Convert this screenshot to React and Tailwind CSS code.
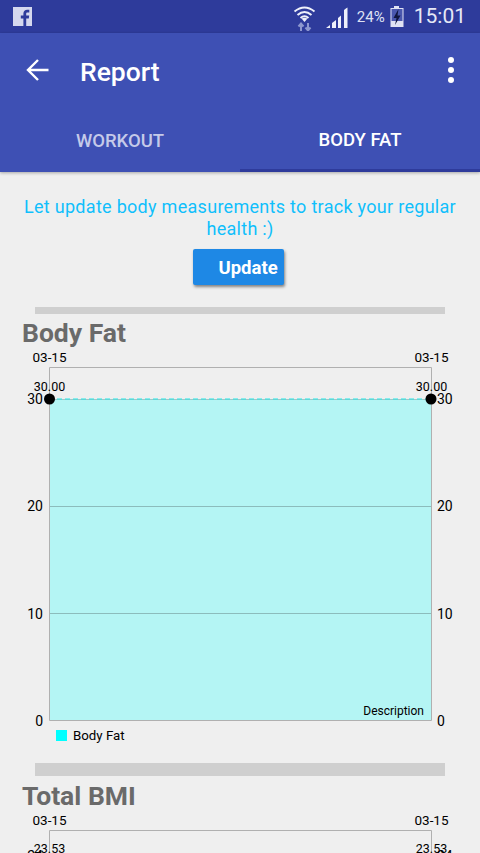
const font = { fontFamily: "Roboto, sans-serif" };

function StatusIcons() {
  return (
    <div className="flex items-center">
      <svg width="24" height="28" viewBox="0 0 24 28" className="mr-[9px]">
        <g fill="none" stroke="#eef0fa" strokeWidth="2">
          <path d="M1.5 8.5 Q11.5 0.5 21.5 8.5" />
          <path d="M4.5 12 Q11.5 6 18.5 12" />
          <path d="M7.5 15 Q11.5 11.5 15.5 15" />
        </g>
        <path d="M11.5 19 L8.5 15.5 Q11.5 14 14.5 15.5 Z" fill="#eef0fa" />
        <path d="M8 28 V21 M5.5 23.5 L8 20.5 L10.5 23.5 M15 20 V27 M12.5 24.5 L15 27.5 L17.5 24.5" stroke="#8d97cf" strokeWidth="2" fill="none" />
      </svg>
      <svg width="22" height="22" viewBox="0 0 22 22" className="mr-[9px] mt-[3px]" fill="#eef0fa">
        <path d="M0 21 L4 18 V21 Z" />
        <path d="M6 21 V16 L10 13 V21 Z" />
        <path d="M12 21 V11 L15 8.5 V21 Z" />
        <path d="M18 21 V3 Q20 1 21.5 0.5 V21 Z" />
      </svg>
      <span className="text-[15px] text-[#dfe2f4] mr-[5px] mt-[1px]">24%</span>
      <svg width="14" height="22" viewBox="0 0 14 22" className="mr-[10px] mt-[1px]">
        <path d="M4 0 H9 V2 H13.5 V21 H0.5 V2 H4 Z" fill="#dfe2f4" />
        <path d="M1.5 3 H12.5 V15 H1.5 Z" fill="#4a57ae" />
        <path d="M8.5 3 L3.5 12 H6.5 L5 19 L10.5 9.5 H7.5 Z" fill="#10163f" />
      </svg>
      <span className="text-[21px] text-[#e6e8f6]">15:01</span>
    </div>
  );
}

function Chart({ value, valueY, ticks, height, showDesc }) {
  const L = 49, R = 431, T = 20, B = 373;
  const y30 = 52;
  return (
    <svg width="480" height={height} viewBox={`0 0 480 ${height}`} className="block shrink-0" style={font}>
      <text x="49.5" y="14.5" textAnchor="middle" fontSize="13.5" fill="#000">03-15</text>
      <text x="431.5" y="14.5" textAnchor="middle" fontSize="13.5" fill="#000">03-15</text>
      {showDesc && <rect x={L + 1} y={y30} width={R - L - 1} height={B - y30} fill="#b4f5f4" />}
      {showDesc && <line x1={L} x2={R} y1={159.5} y2={159.5} stroke="#8cbcbc" />}
      {showDesc && <line x1={L} x2={R} y1={266.5} y2={266.5} stroke="#8cbcbc" />}
      {showDesc && <line x1={L} x2={R} y1={y30 + 0.5} y2={y30 + 0.5} stroke="#9fc8c8" />}
      {showDesc && <line x1={L} x2={R} y1={y30} y2={y30} stroke="#22e6e6" strokeDasharray="5 3" />}
      <path d={`M${L + 0.5} ${B + 0.5} V${T + 0.5} H${R + 0.5} V${B + 0.5} H${L + 0.5}`} fill="none" stroke="#b0b0b0" strokeWidth="1" />
      <text x="49.5" y={valueY} textAnchor="middle" fontSize="12.5" fill="#000">{value}</text>
      <text x="431.5" y={valueY} textAnchor="middle" fontSize="12.5" fill="#000">{value}</text>
      {showDesc && <circle cx="49.5" cy={y30} r="5.5" fill="#000" />}
      {showDesc && <circle cx="431" cy={y30} r="5.5" fill="#000" />}
      {ticks.map(([t, y]) => (
        <g key={t}>
          <text x="43" y={y + 5} textAnchor="end" fontSize="14" fill="#000">{t}</text>
          <text x="437" y={y + 5} fontSize="14" fill="#000">{t}</text>
        </g>
      ))}
      {showDesc && <text x="424" y="368" textAnchor="end" fontSize="12" fill="#000">Description</text>}
      {showDesc && <rect x="56" y="383" width="11" height="11" fill="#00ffff" />}
      {showDesc && <text x="73" y="393" fontSize="13.3" fill="#000">Body Fat</text>}
    </svg>
  );
}

export default function App() {
  return (
    <div className="w-[480px] h-[853px] overflow-hidden flex flex-col bg-[#efefef]" style={font}>
      <div className="h-[33px] shrink-0 bg-[#2e3b9b] flex items-center justify-between pl-[13px] pr-[14px]">
        <svg width="19" height="19" viewBox="0 0 19 19" className="mb-[1px]">
          <rect width="19" height="19" fill="#d5d8ee" />
          <path d="M13.2 19 V11.5 H15.8 L16.2 8.6 H13.2 V6.8 C13.2 5.9 13.5 5.4 14.7 5.4 H16.3 V2.8 C15.9 2.8 15.1 2.7 14.2 2.7 C12 2.7 10.4 4 10.4 6.5 V8.6 H7.8 V11.5 H10.4 V19 Z" fill="#2e3b9b" />
        </svg>
        <StatusIcons />
      </div>
      <header className="h-[139px] shrink-0 bg-[#3e50b4] flex flex-col shadow-[0_1px_3px_rgba(0,0,0,0.3)] z-10">
        <div className="h-[76px] flex items-center pl-[26px] pr-[26px]">
          <svg width="24" height="24" viewBox="0 0 24 24" fill="none" stroke="#fff" strokeWidth="2.4" className="mb-[2px] mr-[30px]">
            <path d="M22.5 12 H2 M12 2 L2 12 L12 22" />
          </svg>
          <h1 className="text-[26.5px] font-medium text-white flex-1 leading-none mt-[3px]">Report</h1>
          <div className="flex flex-col gap-[4px] mb-[2px]">
            <span className="w-[6px] h-[6px] rounded-full bg-white" />
            <span className="w-[6px] h-[6px] rounded-full bg-white" />
            <span className="w-[6px] h-[6px] rounded-full bg-white" />
          </div>
        </div>
        <div className="flex-1 flex">
          <div className="w-[240px] flex items-center justify-center text-[18.5px] font-medium text-[#c5cae9] pt-[2px]">WORKOUT</div>
          <div className="w-[240px] flex items-center justify-center text-[18.5px] font-medium text-white border-b-[3px] border-[#2e3b9b] pt-[4px]">BODY FAT</div>
        </div>
      </header>
      <main className="flex flex-col">
        <p className="mt-[24px] px-[20px] text-center text-[18px] leading-[22px] tracking-[0.29px] text-[#10bffc]">
          Let update body measurements to track your regular health :)
        </p>
        <div className="mt-[9px] flex justify-center">
          <button className="ml-[-4px] w-[91px] h-[36px] rounded-[2px] bg-[#1e88e5] text-white text-[18.5px] font-bold text-left pl-[26px] pt-[4px] shadow-[1px_2px_3px_rgba(0,0,0,0.45)]">Update</button>
        </div>
        <div className="mt-[22px] mx-[35px] h-[7px] bg-[#cfcfcf]" />
        <h2 className="ml-[22px] mt-[5px] text-[26.5px] leading-[28px] font-bold text-[#6a6a6a]">Body Fat</h2>
        <Chart value="30.00" valueY={44} showDesc height={398} ticks={[["30", 52], ["20", 159], ["10", 267], ["0", 374]]} />
        <div className="mt-[18px] mx-[35px] h-[13px] bg-[#cfcfcf] shrink-0" />
        <h2 className="ml-[22px] mt-[6px] text-[26.5px] leading-[28px] font-bold text-[#6a6a6a]">Total BMI</h2>
        <Chart value="23.53" valueY={43} height={60} ticks={[["24", 46]]} />
      </main>
    </div>
  );
}
